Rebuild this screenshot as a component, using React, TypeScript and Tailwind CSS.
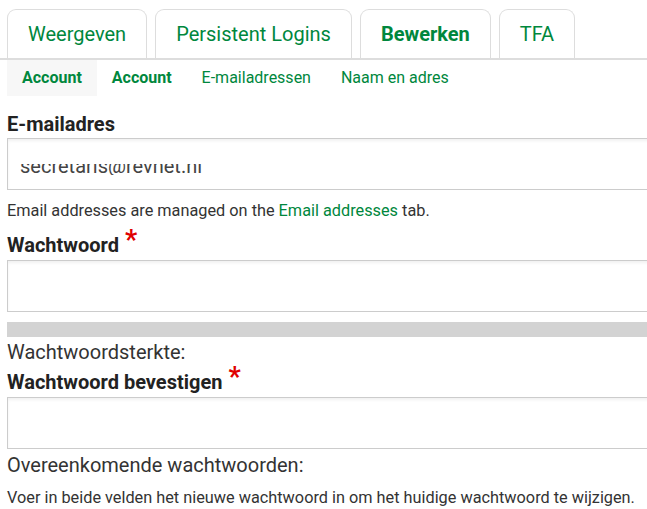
import React from 'react';

const tabs = [
  { label: 'Weergeven', active: false },
  { label: 'Persistent Logins', active: false },
  { label: 'Bewerken', active: true },
  { label: 'TFA', active: false },
];

const subTabs = [
  { label: 'Account', bold: true, current: true },
  { label: 'Account', bold: true, current: false },
  { label: 'E-mailadressen', bold: false, current: false },
  { label: 'Naam en adres', bold: false, current: false },
];

function Label({ text, required }: { text: string; required?: boolean }) {
  return (
    <div className="text-[20px] font-bold text-[#222] leading-[24px]">
      {text}
      {required && <span className="ml-[6px] text-[27px] leading-none text-[#e00000] align-[3px]">*</span>}
    </div>
  );
}

function Input({ children }: { children?: React.ReactNode }) {
  return (
    <div className="h-[52px] w-[660px] border border-[#ccc] bg-white shadow-[inset_0_2px_3px_rgba(0,0,0,0.06)] flex items-center px-[12px]">
      {children}
    </div>
  );
}

export default function App() {
  return (
    <div className="w-[647px] h-[509px] overflow-hidden bg-white font-['Roboto',sans-serif] text-[#333]">
      <div className="pl-[7px] pt-[9px] flex gap-[8px] border-b-2 border-[#ddd]">
        {tabs.map((t) => (
          <div
            key={t.label}
            className={`h-[49px] px-[20px] flex items-center border border-b-0 border-[#ddd] rounded-t-[9px] text-[20px] text-[#00873d] ${t.active ? 'font-bold' : ''}`}
          >
            {t.label}
          </div>
        ))}
      </div>
      <div className="pl-[7px] flex">
        {subTabs.map((s, i) => (
          <div
            key={i}
            className={`h-[36px] px-[15px] flex items-center text-[16px] text-[#00873d] ${s.bold ? 'font-bold' : ''} ${s.current ? 'bg-[#f7f7f7]' : ''}`}
          >
            {s.label}
          </div>
        ))}
      </div>
      <div className="pl-[7px]">
        <div className="mt-[16px]">
          <Label text="E-mailadres" />
        </div>
        <div className="mt-[2px]">
          <Input>
            <div className="h-[11px] overflow-hidden mt-[10px]">
              <span className="block -mt-[10px] text-[20px] leading-[24px] text-[#444]">secretaris@revnet.nl</span>
            </div>
          </Input>
        </div>
        <div className="mt-[11px] text-[16.3px] leading-[20px] text-[#333]">
          Email addresses are managed on the <span className="text-[#00873d]">Email addresses</span> tab.
        </div>
        <div className="mt-[6px]">
          <Label text="Wachtwoord" required />
        </div>
        <div className="mt-[3px]">
          <Input />
        </div>
        <div className="mt-[10px] h-[15px] w-[660px] bg-[#d3d3d3]" />
        <div className="mt-[3px] text-[20px] leading-[24px] text-[#333]">Wachtwoordsterkte:</div>
        <div>
          <Label text="Wachtwoord bevestigen" required />
        </div>
        <div className="mt-[3px]">
          <Input />
        </div>
        <div className="mt-[4px] text-[20px] leading-[24px] text-[#333]">Overeenkomende wachtwoorden:</div>
        <div className="mt-[11px] text-[16.3px] leading-[20px] text-[#333]">
          Voer in beide velden het nieuwe wachtwoord in om het huidige wachtwoord te wijzigen.
        </div>
      </div>
    </div>
  );
}
